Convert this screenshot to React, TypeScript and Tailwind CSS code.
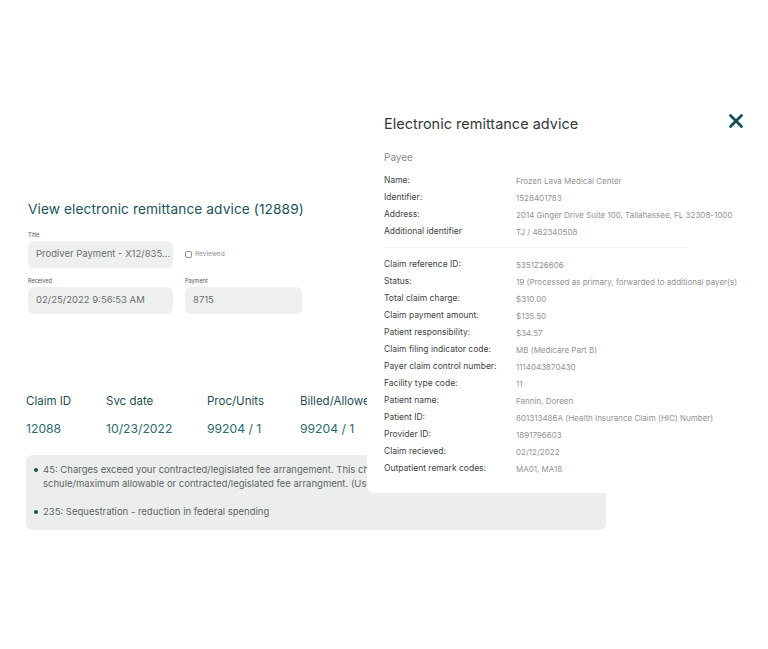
import React from "react";

const payee: [string, string][] = [
  ["Name:", "Frozen Lava Medical Center"],
  ["Identifier:", "1528401783"],
  ["Address:", "2014 Ginger Drive Suite 100, Tallahassee, FL 32308-1000"],
  ["Additional identifier", "TJ / 462340508"],
];

const claim: [string, string][] = [
  ["Claim reference ID:", "5351Z26606"],
  ["Status:", "19 (Processed as primary, forwarded to additional payer(s)"],
  ["Total claim charge:", "$310.00"],
  ["Claim payment amount:", "$135.50"],
  ["Patient responsibility:", "$34.57"],
  ["Claim filing indicator code:", "MB (Medicare Part B)"],
  ["Payer claim control number:", "1114043870430"],
  ["Facility type code:", "11"],
  ["Patient name:", "Fannin, Doreen"],
  ["Patient ID:", "801313486A (Health Insurance Claim (HIC) Number)"],
  ["Provider ID:", "1891796603"],
  ["Claim recieved:", "02/12/2022"],
  ["Outpatient remark codes:", "MA01, MA18"],
];

function Row({ k, v }: { k: string; v: string }) {
  return (
    <div className="flex h-[17px] items-center">
      <div className="w-[132px] shrink-0 text-[8.5px] text-[#3d4444]">{k}</div>
      <div className="whitespace-nowrap text-[8px] text-[#8f9494]">{v}</div>
    </div>
  );
}

export default function App() {
  return (
    <div
      className="relative h-[649px] w-[768px] overflow-hidden bg-white"
      style={{ fontFamily: "Inter, 'Noto Sans', sans-serif" }}
    >
      <div className="pl-[28px] pt-[199px]">
        <h1 className="text-[13.7px] font-normal leading-[20px] tracking-[0.1px] text-[#21525a]">
          View electronic remittance advice (12889)
        </h1>
        <div className="mt-[11px] flex gap-[12px]">
          <div className="flex flex-col">
            <div className="h-[11px] text-[5.5px] leading-[11px] text-[#555]">Title</div>
            <div className="flex h-[27px] w-[145px] items-center rounded-md bg-[#eef0ef] pl-[8px] text-[9.5px] text-[#6b6f6f]">
              Prodiver Payment - X12/835...
            </div>
          </div>
          <div className="flex items-center pt-[11px]">
            <div className="h-[7px] w-[7px] rounded-[2px] border border-[#8a8f8f]" />
            <span className="ml-[3px] text-[6.5px] text-[#8a8f8f]">Reviewed</span>
          </div>
        </div>
        <div className="mt-[8px] flex gap-[12px]">
          <div className="flex flex-col">
            <div className="h-[11px] text-[5.5px] leading-[11px] text-[#555]">Received</div>
            <div className="flex h-[27px] w-[145px] items-center rounded-md bg-[#eef0ef] pl-[8px] text-[9.5px] text-[#6b6f6f]">
              02/25/2022 9:56:53 AM
            </div>
          </div>
          <div className="flex flex-col">
            <div className="h-[11px] text-[5.5px] leading-[11px] text-[#555]">Payment</div>
            <div className="flex h-[27px] w-[117px] items-center rounded-md bg-[#eef0ef] pl-[8px] text-[9.5px] text-[#6b6f6f]">
              8715
            </div>
          </div>
        </div>
      </div>

      <div className="mt-[78px] pl-[26px]">
        <div className="flex h-[20px] items-center text-[11.5px] text-[#1f4d54]">
          <div className="w-[80px]">Claim ID</div>
          <div className="w-[101px]">Svc date</div>
          <div className="w-[93px]">Proc/Units</div>
          <div className="whitespace-nowrap">Billed/Allowed</div>
        </div>
        <div className="mt-[7px] flex h-[20px] items-center text-[12.2px] text-[#2d6a6e]">
          <div className="w-[80px]">12088</div>
          <div className="w-[101px]">10/23/2022</div>
          <div className="w-[93px]">99204 / 1</div>
          <div>99204 / 1</div>
        </div>
        <div className="mt-[16px] h-[75px] w-[580px] overflow-hidden rounded-md bg-[#eceeed] pl-[8px] pr-[8px] pt-[8px] text-[9.5px] leading-[14px] text-[#5d6565]">
          <div className="flex">
            <span className="mr-[5px] mt-[5px] h-[4px] w-[4px] shrink-0 rounded-full bg-[#1f4d54]" />
            <div className="whitespace-nowrap">
              <div>45: Charges exceed your contracted/legislated fee arrangement. This change to be effective 4/1/2008: Charges exceed our fee</div>
              <div>schule/maximum allowable or contracted/legislated fee arrangment. (Use only with Group Code PR)</div>
            </div>
          </div>
          <div className="mt-[14px] flex">
            <span className="mr-[5px] mt-[5px] h-[4px] w-[4px] shrink-0 rounded-full bg-[#1f4d54]" />
            <span>235: Sequestration - reduction in federal spending</span>
          </div>
        </div>
      </div>

      <div className="absolute left-[367px] top-[88px] h-[405px] w-[401px] rounded-bl-lg bg-white pl-[17px] pt-[26px]">
        <div className="flex items-center justify-between pr-[24px]">
          <div className="text-[14.5px] leading-[20px] text-[#333838]">Electronic remittance advice</div>
          <svg width="16" height="16" viewBox="0 0 16 16" className="-mt-[6px]">
            <path d="M2.5 2.5 L13.5 13.5 M13.5 2.5 L2.5 13.5" stroke="#134e5a" strokeWidth="2.8" strokeLinecap="round" />
          </svg>
        </div>
        <div className="mt-[16px] text-[10px] leading-[14px] text-[#8a8f8f]">Payee</div>
        <div className="mt-[8px]">
          {payee.map(([k, v]) => (
            <Row key={k} k={k} v={v} />
          ))}
        </div>
        <div className="mt-[7px] h-px w-[304px] bg-[#eef0ef]" />
        <div className="mt-[8px]">
          {claim.map(([k, v]) => (
            <Row key={k} k={k} v={v} />
          ))}
        </div>
      </div>
    </div>
  );
}
